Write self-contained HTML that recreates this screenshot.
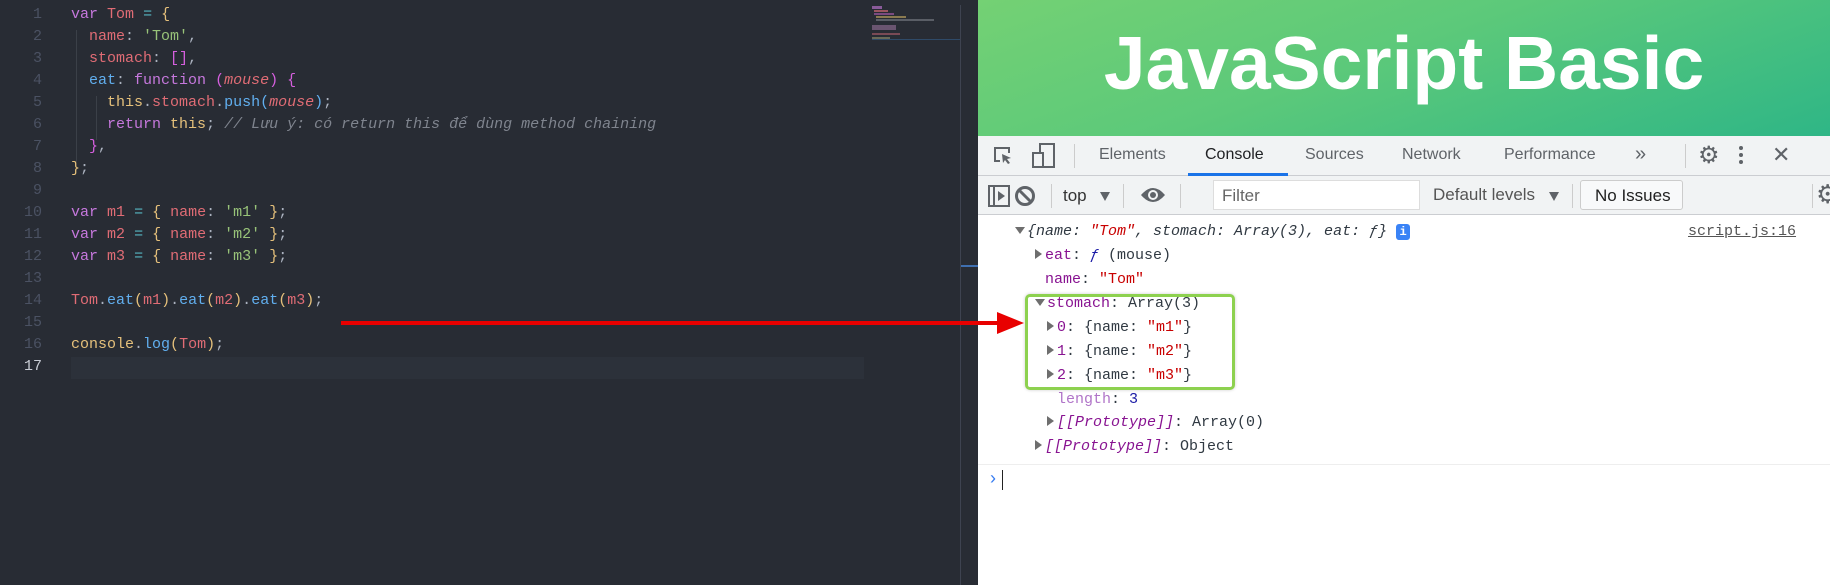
<!DOCTYPE html>
<html><head><meta charset="utf-8"><style>
*{margin:0;padding:0;box-sizing:border-box}
body{width:1830px;height:585px;overflow:hidden;background:#282c34;position:relative;font-family:"Liberation Sans",sans-serif}
.ed{position:absolute;left:0;top:0;width:978px;height:585px;background:#282c34}
.ln{position:absolute;left:0;width:42px;text-align:right;font:15px "Liberation Mono",monospace;color:#4b5263}
.cl{position:absolute;left:71px;font:15px "Liberation Mono",monospace;color:#abb2bf;white-space:pre}
.k{color:#c678dd}.r{color:#e06c75}.s{color:#98c379}.y{color:#e5c07b}.b{color:#61afef}.p{color:#d55fde}.i{font-style:italic}.c{color:#7f848e;font-style:italic}.o{color:#56b6c2}
.rp{position:absolute;left:978px;top:0;width:852px;height:585px;background:#fff}
.hd{position:absolute;left:0;top:0;width:852px;height:136px;background:linear-gradient(160deg,#74d174 0%,#5cc97a 45%,#2fb686 100%)}
.hd h1{position:absolute;left:0;width:852px;top:20px;text-align:center;color:#fff;font:bold 75px "Liberation Sans",sans-serif}
.tb{position:absolute;left:0;top:136px;width:852px;height:40px;background:#f1f3f4;border-bottom:1px solid #cbcdd1;font-size:16px;color:#5f6368}
.tb2{position:absolute;left:0;top:176px;width:852px;height:39px;background:#f1f3f4;border-bottom:1px solid #cbcdd1;font-size:16px;color:#333}
.a{position:absolute}
.con{position:absolute;font:15px "Liberation Mono",monospace;color:#303942;white-space:pre}
.pu{color:#881391}.rd{color:#c80000}.bl{color:#1a1aa6}.lp{color:#b074c8}
.tri{display:inline-block;width:0;height:0;border-top:5px solid transparent;border-bottom:5px solid transparent;border-left:7px solid #6e6e6e;margin-right:3px;vertical-align:0}
.trd{display:inline-block;width:0;height:0;border-left:5px solid transparent;border-right:5px solid transparent;border-top:7px solid #6e6e6e;margin-right:2px;vertical-align:1px}
</style></head><body>
<div class="ed">
<div class="ln" style="top:6px">1</div><div class="ln" style="top:28px">2</div><div class="ln" style="top:50px">3</div><div class="ln" style="top:72px">4</div><div class="ln" style="top:94px">5</div><div class="ln" style="top:116px">6</div><div class="ln" style="top:138px">7</div><div class="ln" style="top:160px">8</div><div class="ln" style="top:182px">9</div><div class="ln" style="top:204px">10</div><div class="ln" style="top:226px">11</div><div class="ln" style="top:248px">12</div><div class="ln" style="top:270px">13</div><div class="ln" style="top:292px">14</div><div class="ln" style="top:314px">15</div><div class="ln" style="top:336px">16</div><div class="ln" style="top:358px;color:#c8ccd4">17</div>
<div style="position:absolute;left:71px;top:357px;width:793px;height:22px;background:#2c313a"></div>
<div style="position:absolute;left:76px;top:30px;width:1px;height:132px;background:#3b4048"></div>
<div style="position:absolute;left:96px;top:96px;width:1px;height:44px;background:#3b4048"></div>
<div class="cl" style="top:6px"><span class="k">var</span> <span class="r">Tom</span> <span class="o">=</span> <span class="y">{</span></div>
<div class="cl" style="top:28px">  <span class="r">name</span>: <span class="s">'Tom'</span>,</div>
<div class="cl" style="top:50px">  <span class="r">stomach</span>: <span class="p">[]</span>,</div>
<div class="cl" style="top:72px">  <span class="b">eat</span>: <span class="k">function</span> <span class="p">(</span><span class="r i">mouse</span><span class="p">)</span> <span class="p">{</span></div>
<div class="cl" style="top:94px">    <span class="y">this</span>.<span class="r">stomach</span>.<span class="b">push</span><span class="b">(</span><span class="r i">mouse</span><span class="b">)</span>;</div>
<div class="cl" style="top:116px">    <span class="k">return</span> <span class="y">this</span>; <span class="c">// Lưu ý: có return this để dùng method chaining</span></div>
<div class="cl" style="top:138px">  <span class="p">}</span>,</div>
<div class="cl" style="top:160px"><span class="y">}</span>;</div>
<div class="cl" style="top:204px"><span class="k">var</span> <span class="r">m1</span> <span class="o">=</span> <span class="y">{</span> <span class="r">name</span>: <span class="s">'m1'</span> <span class="y">}</span>;</div>
<div class="cl" style="top:226px"><span class="k">var</span> <span class="r">m2</span> <span class="o">=</span> <span class="y">{</span> <span class="r">name</span>: <span class="s">'m2'</span> <span class="y">}</span>;</div>
<div class="cl" style="top:248px"><span class="k">var</span> <span class="r">m3</span> <span class="o">=</span> <span class="y">{</span> <span class="r">name</span>: <span class="s">'m3'</span> <span class="y">}</span>;</div>
<div class="cl" style="top:292px"><span class="r">Tom</span>.<span class="b">eat</span><span class="y">(</span><span class="r">m1</span><span class="y">)</span>.<span class="b">eat</span><span class="y">(</span><span class="r">m2</span><span class="y">)</span>.<span class="b">eat</span><span class="y">(</span><span class="r">m3</span><span class="y">)</span>;</div>
<div class="cl" style="top:336px"><span class="y">console</span>.<span class="b">log</span><span class="y">(</span><span class="r">Tom</span><span class="y">)</span>;</div>
<div style="position:absolute;left:872px;top:6px;width:10px;height:3px;background:#8a5b9a"></div>
<div style="position:absolute;left:874px;top:10px;width:14px;height:2px;background:#9a5560"></div>
<div style="position:absolute;left:874px;top:13px;width:20px;height:2px;background:#7a4a80"></div>
<div style="position:absolute;left:876px;top:16px;width:30px;height:2px;background:#8a7a50"></div>
<div style="position:absolute;left:876px;top:19px;width:58px;height:2px;background:#5a5e66"></div>
<div style="position:absolute;left:872px;top:25px;width:24px;height:5px;background:#6a5570"></div>
<div style="position:absolute;left:872px;top:33px;width:28px;height:2px;background:#7a4a55"></div>
<div style="position:absolute;left:872px;top:37px;width:18px;height:2px;background:#6a6a58"></div>
<div style="position:absolute;left:872px;top:39px;width:88px;height:1px;background:#2f4a68"></div>
<div style="position:absolute;left:960px;top:5px;width:1px;height:580px;background:#3e4350"></div>
<div style="position:absolute;left:961px;top:265px;width:17px;height:2px;background:#3f6fb0"></div>
</div>
<div class="rp">
<div class="hd"><h1>JavaScript Basic</h1></div>
<div class="tb">
<svg class="a" style="left:14px;top:9px" width="22" height="22" viewBox="0 0 22 22"><path d="M8 16H3V3h14v5" fill="none" stroke="#5f6368" stroke-width="2"/><path d="M10 9l9 4-4 1 3 4-2 1-3-4-2 3z" fill="#5f6368"/></svg>
<svg class="a" style="left:54px;top:7px" width="24" height="26" viewBox="0 0 24 26"><rect x="8" y="1" width="14" height="23" fill="none" stroke="#5f6368" stroke-width="2"/><rect x="1" y="10" width="10" height="14" fill="#f1f3f4" stroke="#5f6368" stroke-width="2"/></svg>
<div class="a" style="left:96px;top:8px;width:1px;height:24px;background:#ccc"></div>
<div class="a" style="left:121px;top:10px">Elements</div>
<div class="a" style="left:227px;top:10px;color:#202124">Console</div>
<div class="a" style="left:327px;top:10px">Sources</div>
<div class="a" style="left:424px;top:10px">Network</div>
<div class="a" style="left:526px;top:10px">Performance</div>
<div class="a" style="left:657px;top:7px;font-size:20px">»</div>
<div class="a" style="left:210px;top:37px;width:100px;height:3px;background:#1a73e8"></div>
<div class="a" style="left:707px;top:8px;width:1px;height:24px;background:#ccc"></div>
<div class="a" style="left:720px;top:5px;font-size:24px;color:#5f6368">⚙</div>
<div class="a" style="left:761px;top:10px;width:4px;height:4px;border-radius:2px;background:#5f6368;box-shadow:0 7px 0 #5f6368,0 14px 0 #5f6368"></div>
<div class="a" style="left:794px;top:6px;font-size:22px;color:#5f6368">✕</div>
</div>
<div class="tb2">
<svg class="a" style="left:10px;top:9px" width="22" height="22" viewBox="0 0 22 22"><rect x="1" y="1" width="20" height="20" fill="none" stroke="#5f6368" stroke-width="2"/><path d="M6 1v20" stroke="#5f6368" stroke-width="2"/><path d="M10 6l7 5-7 5z" fill="#5f6368"/></svg>
<svg class="a" style="left:36px;top:9px" width="22" height="22" viewBox="0 0 22 22"><circle cx="11" cy="11" r="8.5" fill="none" stroke="#5f6368" stroke-width="3"/><path d="M5 5l12 12" stroke="#5f6368" stroke-width="3"/></svg>
<div class="a" style="left:73px;top:8px;width:1px;height:24px;background:#ccc"></div>
<div class="a" style="left:85px;top:10px;font-size:17px">top</div>
<div class="a" style="left:122px;top:16px;border-left:5px solid transparent;border-right:5px solid transparent;border-top:9px solid #5f6368;width:0;height:0"></div>
<div class="a" style="left:145px;top:8px;width:1px;height:24px;background:#ccc"></div>
<svg class="a" style="left:162px;top:10px" width="26" height="18" viewBox="0 0 26 18"><path d="M1 9Q13 -5 25 9Q13 23 1 9z" fill="#5f6368"/><circle cx="13" cy="9" r="5" fill="#f1f3f4"/><circle cx="13" cy="9" r="3" fill="#5f6368"/></svg>
<div class="a" style="left:202px;top:8px;width:1px;height:24px;background:#ccc"></div>
<div class="a" style="left:235px;top:4px;width:207px;height:30px;background:#fff;border:1px solid #ddd"></div>
<div class="a" style="left:244px;top:10px;font-size:17px;color:#666">Filter</div>
<div class="a" style="left:455px;top:9px;color:#555;font-size:17px">Default levels</div>
<div class="a" style="left:571px;top:16px;border-left:5px solid transparent;border-right:5px solid transparent;border-top:9px solid #5f6368;width:0;height:0"></div>
<div class="a" style="left:594px;top:8px;width:1px;height:24px;background:#ccc"></div>
<div class="a" style="left:602px;top:4px;width:103px;height:30px;background:#f8f9fa;border:1px solid #ccc;border-radius:3px"></div>
<div class="a" style="left:617px;top:10px;font-size:17px;color:#222">No Issues</div>
<div class="a" style="left:834px;top:8px;width:1px;height:24px;background:#ccc"></div>
<div class="a" style="left:838px;top:3px;font-size:26px;color:#5f6368">⚙</div>
</div>
<div class="con" style="left:37px;top:223px"><span class="trd"></span><span class="i">{name: <span class="rd">"Tom"</span>, stomach: Array(3), eat: ƒ}</span> <span style="display:inline-block;width:14px;height:16px;background:#3a83f6;color:#fff;border-radius:3px;font-size:12px;text-align:center;line-height:16px;font-weight:bold">i</span></div>
<div class="con" style="left:710px;top:223px;color:#555;text-decoration:underline">script.js:16</div>
<div class="con" style="left:57px;top:247px"><span class="tri"></span><span class="pu">eat</span>: <span class="i bl">ƒ</span> (mouse)</div>
<div class="con" style="left:67px;top:271px"><span class="pu">name</span>: <span class="rd">"Tom"</span></div>
<div class="con" style="left:57px;top:295px"><span class="trd"></span><span class="pu">stomach</span>: Array(3)</div>
<div class="con" style="left:69px;top:319px"><span class="tri"></span><span class="pu">0</span>: {name: <span class="rd">"m1"</span>}</div>
<div class="con" style="left:69px;top:343px"><span class="tri"></span><span class="pu">1</span>: {name: <span class="rd">"m2"</span>}</div>
<div class="con" style="left:69px;top:367px"><span class="tri"></span><span class="pu">2</span>: {name: <span class="rd">"m3"</span>}</div>
<div class="con" style="left:79px;top:391px"><span class="lp">length</span>: <span class="bl">3</span></div>
<div class="con" style="left:69px;top:414px"><span class="tri"></span><span class="i pu">[[Prototype]]</span>: Array(0)</div>
<div class="con" style="left:57px;top:438px"><span class="tri"></span><span class="i pu">[[Prototype]]</span>: Object</div>
<div class="a" style="left:47px;top:294px;width:210px;height:96px;border:3px solid #8dd14f;border-radius:5px;box-shadow:0 0 3px rgba(0,0,0,.2)"></div>
<div class="a" style="left:0;top:464px;width:852px;height:1px;background:#eee"></div>
<div class="a" style="left:12px;top:468px;color:#367cf1;font-size:18px">›</div>
<div class="a" style="left:24px;top:470px;width:1px;height:20px;background:#222"></div>
</div>
<div style="position:absolute;z-index:5;left:341px;top:321px;width:660px;height:4px;background:#e80000"></div>
<div style="position:absolute;z-index:5;left:997px;top:312px;width:0;height:0;border-top:11px solid transparent;border-bottom:11px solid transparent;border-left:27px solid #e80000"></div>
</body></html>
